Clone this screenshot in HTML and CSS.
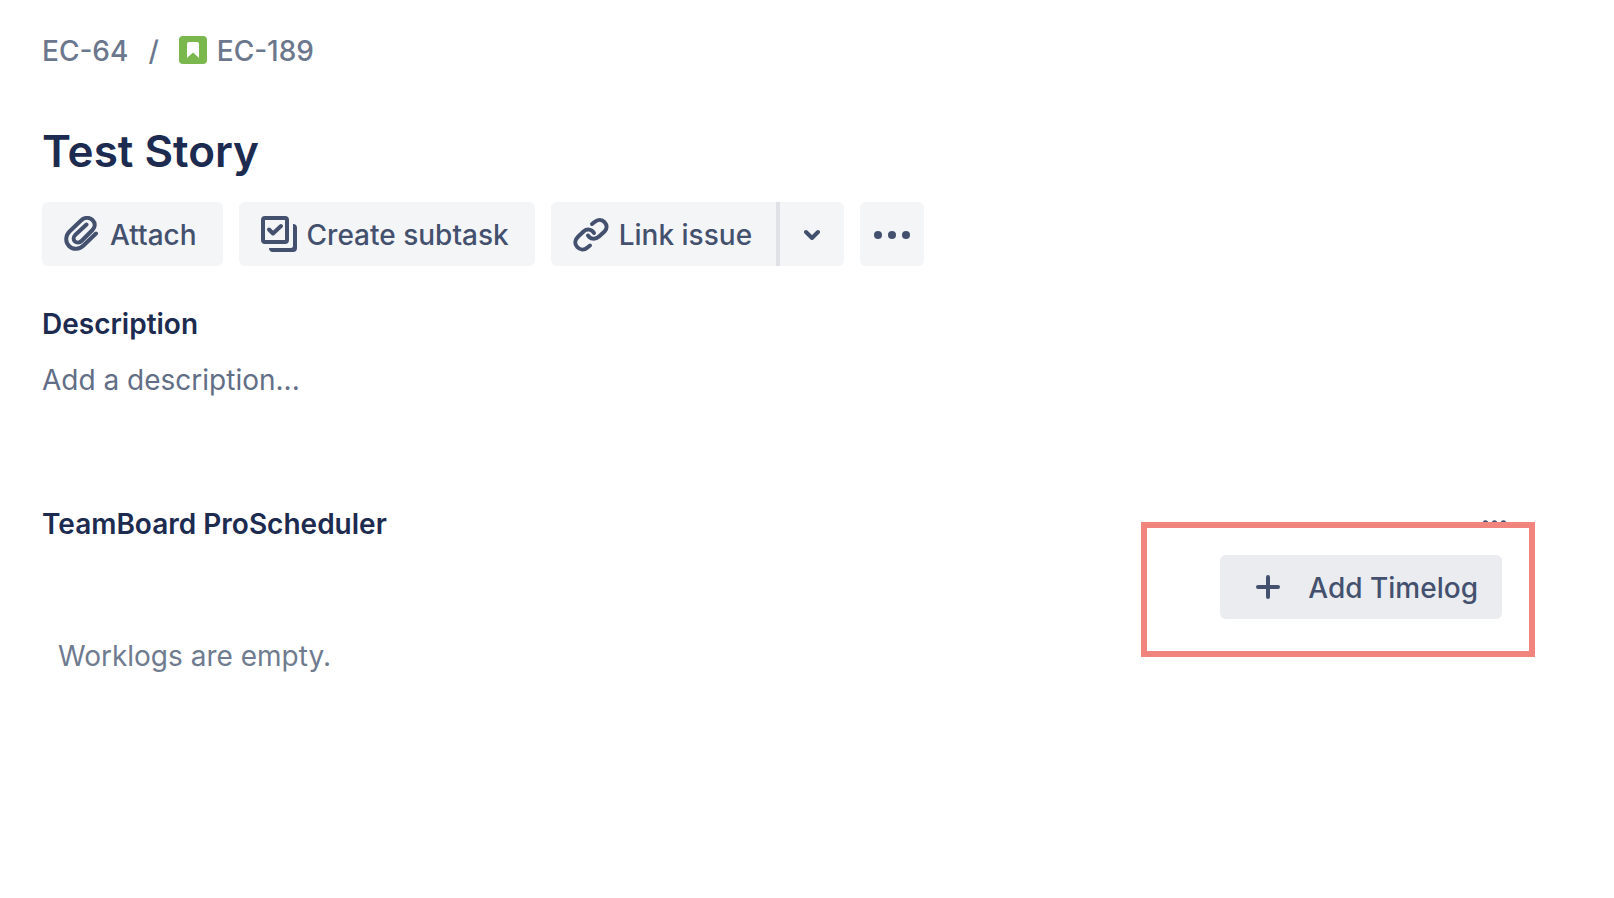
FILE: index.html
```html
<!DOCTYPE html>
<html lang="en">
<head>
<meta charset="utf-8">
<title>EC-189 Test Story</title>
<link rel="stylesheet" href="styles.css">
</head>
<body>
<main class="issue">
  <nav class="breadcrumbs" aria-label="Breadcrumbs">
    <a class="crumb" href="#">EC-64</a>
    <span class="separator">/</span>
    <a class="crumb crumb-story" href="#">
      <svg class="story-icon" viewBox="0 0 28 28" aria-hidden="true">
        <rect width="28" height="28" rx="4" fill="#7ab84d"/>
        <path d="M8 8a2 2 0 0 1 2-2h8a2 2 0 0 1 2 2v14l-6-5.500-6 5.500z" fill="#fff"/>
      </svg>
      <span>EC-189</span>
    </a>
  </nav>

  <h1 class="title">Test Story</h1>

  <div class="toolbar">
    <button class="button" type="button">
      <svg class="icon" viewBox="0 0 36 36" fill="none" stroke="currentColor" stroke-width="4" stroke-linecap="round" stroke-linejoin="round" aria-hidden="true">
        <path d="M32 17.500 19.500 29.500C15.500 33.500 9 34 5 30S1.500 19.500 5.500 15.500L17 4.500C20.500 1 25.500 1 28.500 4S31.500 11 28.500 14L17.500 25C15.500 27 12.500 27 10.800 25.300S9.500 20.800 11.200 19L22.500 8.500"/>
      </svg>
      <span class="label">Attach</span>
    </button>
    <button class="button" type="button">
      <svg class="icon" viewBox="0 0 36 36" fill="none" stroke="currentColor" stroke-width="4" stroke-linecap="round" stroke-linejoin="round" aria-hidden="true">
        <rect x="2" y="2" width="24" height="24" rx="2"/>
        <path d="m8 13.500 4 4 8-7.500"/>
        <path d="M32 8q4 0 4 4v20q0 4-4 4H12q-4 0-4-4h22q2 0 2-2z" fill="currentColor" stroke="none"/>
      </svg>
      <span class="label">Create subtask</span>
    </button>
    <div class="split">
      <button class="button split-main" type="button">
        <svg class="icon" viewBox="0 0 36 36" fill="none" stroke="currentColor" stroke-width="4" stroke-linecap="round" aria-hidden="true">
          <path d="M19 8 21.500 6C25 3 29 3.500 31.500 6.200S34.500 12.500 31.500 15.500L26 20.500C22 24 17 23 15 19.500"/>
          <path d="M21 17C18.500 13 14 12.500 10.500 15.500L5 20.700C1.500 24 1.500 28 4.200 31S11 34.500 14.500 31.500L17 29.500"/>
        </svg>
        <span class="label">Link issue</span>
      </button>
      <button class="button square" type="button" aria-label="More link options">
        <svg class="chevron" viewBox="0 0 16 12" fill="none" stroke="currentColor" stroke-width="4" stroke-linecap="round" stroke-linejoin="round" aria-hidden="true"><path d="m2 4 6 6 6-6"/></svg>
      </button>
    </div>
    <button class="button square" type="button" aria-label="Actions">
      <svg class="icon" viewBox="0 0 36 36" fill="currentColor" aria-hidden="true"><circle cx="4" cy="19" r="4"/><circle cx="18" cy="19" r="4"/><circle cx="32" cy="19" r="4"/></svg>
    </button>
  </div>

  <section class="description">
    <h2 class="heading">Description</h2>
    <p class="placeholder">Add a description...</p>
  </section>

  <section class="panel">
    <header class="panel-header">
      <h2 class="heading">TeamBoard ProScheduler</h2>
      <button class="panel-menu" type="button" aria-label="Panel menu">
        <svg class="dots" viewBox="0 0 24 8" fill="currentColor" aria-hidden="true"><circle cx="2.500" cy="3" r="2.700"/><circle cx="11.500" cy="3" r="2.700"/><circle cx="20.500" cy="3" r="2.700"/></svg>
      </button>
    </header>
    <div class="panel-actions">
      <div class="highlighted">
        <button class="button timelog" type="button">
          <svg class="plus" viewBox="0 0 24 24" fill="none" stroke="currentColor" stroke-width="4" stroke-linecap="round" aria-hidden="true"><path d="M12 2v20M2 12h20"/></svg>
          <span class="label">Add Timelog</span>
        </button>
      </div>
    </div>
    <p class="empty">Worklogs are empty.</p>
  </section>
</main>
</body>
</html>
```

FILE: styles.css
```css
* {
  box-sizing: border-box;
}

body {
  margin: 0;
  background: #fff;
  color: #1c2b4f;
  font-family: Inter, "Liberation Sans", sans-serif;
  font-size: 28px;
  line-height: 32px;
}

h1,
h2,
p {
  margin: 0;
}

svg {
  display: block;
  flex: none;
}

button {
  border: 0;
  font: inherit;
  cursor: pointer;
}

.issue {
  padding: 35px 107px 48px 42px;
}

.breadcrumbs {
  display: flex;
  gap: 20px;
  color: #6b778c;
  font-weight: 450;
}

.crumb {
  color: inherit;
  text-decoration: none;
}

.crumb-story {
  display: flex;
  gap: 10px;
}

.story-icon {
  width: 28px;
  height: 28px;
  margin-top: 1px;
}

.title {
  margin-top: 56px;
  font-size: 44px;
  font-weight: 600;
  line-height: 56px;
}

.toolbar {
  display: flex;
  gap: 16px;
  margin-top: 23px;
}

.button {
  display: flex;
  align-items: center;
  gap: 10px;
  height: 64px;
  padding: 0 26px 0 22px;
  border-radius: 6px;
  background: #f4f5f7;
  color: #44516e;
  font-weight: 500;
  white-space: nowrap;
}

.label {
  padding-top: 2px;
}

.icon {
  width: 36px;
  height: 36px;
}

.split {
  display: flex;
}

.split-main {
  padding-right: 24px;
  border-right: 4px solid #dfe1e6;
  border-radius: 6px 0 0 6px;
}

.square {
  justify-content: center;
  width: 64px;
  padding: 0;
}

.split .square {
  border-radius: 0 6px 6px 0;
}

.chevron {
  width: 16px;
  height: 12px;
}

.description {
  margin-top: 42px;
}

.heading {
  font-size: 28px;
  font-weight: 600;
  line-height: 32px;
}

.placeholder {
  margin-top: 24px;
  color: #626e86;
}

.panel {
  margin-top: 112px;
}

.panel-header {
  display: flex;
  align-items: center;
  justify-content: space-between;
}

.panel-menu {
  padding: 0;
  background: none;
  color: #44516e;
}

.dots {
  width: 24px;
  height: 8px;
}

.panel-actions {
  display: flex;
  justify-content: flex-end;
  padding: 15px 5px 0 0;
}

.highlighted {
  position: relative;
}

.highlighted::after {
  content: "";
  position: absolute;
  inset: -33px -33px -38px -79px;
  border: 6px solid #f1857d;
  pointer-events: none;
}

.timelog {
  gap: 28px;
  padding: 0 24px 0 36px;
  background: #ebecf0;
  font-weight: 450;
}

.plus {
  width: 24px;
  height: 24px;
}

.empty {
  margin-top: 21px;
  padding-left: 16px;
  color: #6f7b8f;
}
```
